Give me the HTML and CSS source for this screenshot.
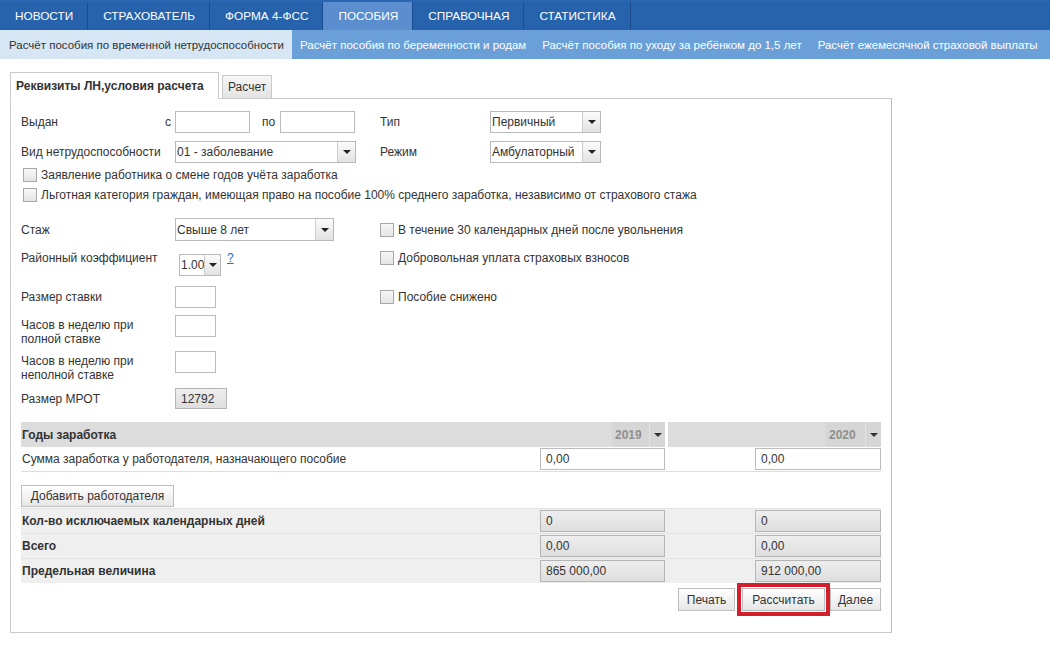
FILE: index.html
```html
<!DOCTYPE html>
<html lang="ru">
<head>
<meta charset="utf-8">
<title>Расчёт пособия</title>
<link rel="stylesheet" href="styles.css">
</head>
<body>
<div class="topnav">
  <div class="nav-item">НОВОСТИ</div>
  <div class="nav-item">СТРАХОВАТЕЛЬ</div>
  <div class="nav-item">ФОРМА 4-ФСС</div>
  <div class="nav-item active">ПОСОБИЯ</div>
  <div class="nav-item">СПРАВОЧНАЯ</div>
  <div class="nav-item">СТАТИСТИКА</div>
</div>
<div class="subnav">
  <div class="sub-item active">Расчёт пособия по временной нетрудоспособности</div>
  <div class="sub-item">Расчёт пособия по беременности и родам</div>
  <div class="sub-item">Расчёт пособия по уходу за ребёнком до 1,5 лет</div>
  <div class="sub-item">Расчёт ежемесячной страховой выплаты</div>
</div>

<div class="content">
  <div class="tabs">
    <div class="tab active">Реквизиты ЛН,условия расчета</div>
    <div class="tab">Расчет</div>
  </div>
  <div class="panel">
    <div class="grid row-1">
      <div class="lbl split"><span>Выдан</span><span>с</span></div>
      <div class="ctl"><span class="input w75"></span><span class="mid">по</span><span class="input w75"></span></div>
      <div class="lbl">Тип</div>
      <div class="ctl"><div class="select w111"><span class="val">Первичный</span><span class="arrow"></span></div></div>
    </div>
    <div class="grid row-2">
      <div class="lbl">Вид нетрудоспособности</div>
      <div class="ctl"><div class="select w181"><span class="val">01 - заболевание</span><span class="arrow"></span></div></div>
      <div class="lbl">Режим</div>
      <div class="ctl"><div class="select w111"><span class="val">Амбулаторный</span><span class="arrow"></span></div></div>
    </div>
    <div class="cb-row first"><span class="cb"></span><span>Заявление работника о смене годов учёта заработка</span></div>
    <div class="cb-row"><span class="cb"></span><span>Льготная категория граждан, имеющая право на пособие 100% среднего заработка, независимо от страхового стажа</span></div>

    <div class="grid row-stazh">
      <div class="lbl">Стаж</div>
      <div class="ctl"><div class="select w159 h23"><span class="val">Свыше 8 лет</span><span class="arrow"></span></div></div>
      <div class="right cb-inline"><span class="cb"></span><span>В течение 30 календарных дней после увольнения</span></div>
    </div>
    <div class="grid row-rk">
      <div class="lbl top">Районный коэффициент</div>
      <div class="ctl start"><div class="select rk"><span class="val">1.00</span><span class="arrow narrow"></span></div><a class="help">?</a></div>
      <div class="right cb-inline top-cb"><span class="cb"></span><span>Добровольная уплата страховых взносов</span></div>
    </div>
    <div class="grid row-stavka">
      <div class="lbl">Размер ставки</div>
      <div class="ctl"><span class="input w41"></span></div>
      <div class="right cb-inline"><span class="cb"></span><span>Пособие снижено</span></div>
    </div>
    <div class="grid row-hours">
      <div class="lbl two">Часов в неделю при<br>полной ставке</div>
      <div class="ctl start"><span class="input w41"></span></div>
    </div>
    <div class="grid row-hours2">
      <div class="lbl two">Часов в неделю при<br>неполной ставке</div>
      <div class="ctl start"><span class="input w41"></span></div>
    </div>
    <div class="grid row-mrot">
      <div class="lbl">Размер МРОТ</div>
      <div class="ctl"><span class="ro mrot">12792</span></div>
    </div>

    <div class="tbl">
      <div class="trow head">
        <div class="hcell first"><span class="b">Годы заработка</span><div class="ysel"><span class="yv">2019</span><span class="ya"></span></div></div>
        <div class="hcell second"><div class="ysel"><span class="yv">2020</span><span class="ya"></span></div></div>
      </div>
      <div class="trow sum">
        <div class="tl">Сумма заработка у работодателя, назначающего пособие</div>
        <div class="tc"><span class="input full">0,00</span></div>
        <div></div>
        <div class="tc"><span class="input full">0,00</span></div>
      </div>
      <div class="add-row"><span class="btn add">Добавить работодателя</span></div>
      <div class="trow gray">
        <div class="tl b">Кол-во исключаемых календарных дней</div>
        <div class="tc"><span class="ro full">0</span></div>
        <div></div>
        <div class="tc"><span class="ro full">0</span></div>
      </div>
      <div class="trow gray">
        <div class="tl b">Всего</div>
        <div class="tc"><span class="ro full">0,00</span></div>
        <div></div>
        <div class="tc"><span class="ro full">0,00</span></div>
      </div>
      <div class="trow gray">
        <div class="tl b">Предельная величина</div>
        <div class="tc"><span class="ro full">865 000,00</span></div>
        <div></div>
        <div class="tc"><span class="ro full">912 000,00</span></div>
      </div>
    </div>
    <div class="actions">
      <span class="btn print">Печать</span>
      <span class="btn calc">Рассчитать</span>
      <span class="btn next">Далее</span>
    </div>
  </div>
</div>
</body>
</html>
```

FILE: styles.css
```css
* { box-sizing: border-box; }
body {
  margin: 0;
  font-family: "Liberation Sans", Arial, sans-serif;
  font-size: 12px;
  color: #333;
  background: #fff;
}

/* top navigation */
.topnav {
  display: flex;
  height: 30px;
  background: #2763ad;
  border-top: 2px solid #2a66b1;
}
.nav-item {
  display: flex;
  align-items: center;
  flex: none;
  white-space: nowrap;
  padding: 0 14px 0 15px;
  color: #fff;
  font-size: 11.8px;
  border-right: 1px solid #1c4d90;
}
.nav-item.active { background: #5b8ecf; }

.subnav {
  display: flex;
  height: 29px;
  background: #6a9fd8;
  overflow: hidden;
}
.sub-item {
  display: flex;
  align-items: center;
  flex: none;
  white-space: nowrap;
  padding: 0 8px;
  color: #fff;
  font-size: 11.5px;
}
.sub-item.active { background: #d6e6f5; color: #333; padding-left: 9px; }

/* content & tabs */
.content {
  margin: 13px 0 0 10px;
  width: 882px;
}
.tabs {
  display: flex;
  align-items: flex-end;
  margin-bottom: -1px;
  position: relative;
  z-index: 1;
}
.tab {
  height: 24px;
  display: flex;
  align-items: center;
  padding: 0 5px;
  border: 1px solid #c9c9c9;
  background: linear-gradient(#f6f6f6, #e3e3e3);
  margin-left: 3px;
}
.tab.active {
  height: 27px;
  width: 209px;
  margin-left: 0;
  font-weight: bold;
  background: #fff;
  border-bottom-color: #fff;
}
.panel {
  border: 1px solid #c9c9c9;
  border-right-color: #bdbdbd;
  padding: 13px 10px 21px 10px;
}

/* form rows */
.grid {
  display: grid;
  grid-template-columns: 154px 205px 110px 1fr;
  align-items: center;
}
.row-1 { height: 22px; margin-top: -1px; }
.row-2 { height: 22px; margin-top: 8px; }
.row-stazh { height: 23px; margin-top: 13px; }
.row-rk { height: 28px; margin-top: 7px; align-items: start; }
.row-stavka { height: 22px; margin-top: 10px; }
.row-hours { height: 31px; margin-top: 7px; align-items: start; }
.row-hours2 { height: 31px; margin-top: 5px; align-items: start; }
.row-mrot { height: 21px; margin-top: 6px; }

.lbl { white-space: nowrap; }
.lbl.split { display: flex; justify-content: space-between; padding-right: 4px; }
.lbl.top { padding-top: 3px; }
.lbl.two { padding-top: 3px; line-height: 14px; }
.ctl { display: flex; align-items: center; }
.ctl.start { align-items: flex-start; }
.right { grid-column: 3 / 5; }

.input {
  display: flex;
  align-items: center;
  height: 22px;
  border: 1px solid #bcbcbc;
  background: #fff;
  padding-left: 5px;
}
.w75 { width: 75px; }
.w41 { width: 41px; }
.mid { margin: 0 5px 0 12px; }

.select {
  display: flex;
  height: 22px;
  border: 1px solid #b9b9b9;
  background: #fff;
}
.select.h23 { height: 23px; }
.w111 { width: 111px; }
.w181 { width: 181px; }
.w159 { width: 159px; }
.select.rk { margin: 6px 0 0 4px; width: 42px; }
.select .val {
  flex: 1;
  display: flex;
  align-items: center;
  padding-left: 1px;
  white-space: nowrap;
  overflow: hidden;
}
.select.rk .val { overflow: visible; }
.arrow {
  width: 18px;
  flex: none;
  border-left: 1px solid #cdcdcd;
  background: linear-gradient(#fbfbfb, #e2e2e2);
  display: flex;
  align-items: center;
  justify-content: center;
}
.arrow.narrow { width: 16px; }
.arrow::after {
  content: "";
  border-left: 4px solid transparent;
  border-right: 4px solid transparent;
  border-top: 4px solid #222;
}
.help {
  margin: 3px 0 0 6px;
  color: #2a6fb8;
  text-decoration: underline;
}

/* checkboxes */
.cb {
  display: inline-block;
  width: 14px;
  height: 14px;
  border: 1px solid #a8a8a8;
  background: linear-gradient(#f7f7f7, #e4e4e4);
  margin-right: 4px;
  flex: none;
}
.cb-row {
  display: flex;
  align-items: center;
  height: 20px;
  padding-left: 2px;
}
.cb-row.first { margin-top: 2px; }
.cb-inline { display: flex; align-items: center; height: 22px; }
.cb-inline.top-cb { height: 20px; }

.ro {
  display: flex;
  align-items: center;
  height: 21px;
  border: 1px solid #b5b5b5;
  background: linear-gradient(#eeeeee, #dedede);
  padding-left: 5px;
}
.mrot { width: 52px; }

/* table */
.tbl { margin-top: 13px; }
.trow {
  display: grid;
  grid-template-columns: 519px 125px 90px 126px;
  align-items: center;
  height: 25px;
}
.trow.head {
  grid-template-columns: 644px 216px;
}
.hcell {
  height: 25px;
  background: #dcdcdc;
  display: flex;
  align-items: center;
  justify-content: space-between;
}
.hcell.first { padding-left: 1px; }
.hcell.second { margin-left: 3px; justify-content: flex-end; }
.b { font-weight: bold; }
.ysel {
  display: flex;
  height: 25px;
  width: 53px;
  background: #d6d6d6;
}
.hcell.second .ysel { width: 55px; }
.yv {
  flex: 1;
  display: flex;
  align-items: center;
  padding-left: 3px;
  font-weight: bold;
  color: #8f8f8f;
}
.ya {
  width: 16px;
  border-left: 1px solid #e4e4e4;
  display: flex;
  align-items: center;
  justify-content: center;
}
.ya::after {
  content: "";
  border-left: 4px solid transparent;
  border-right: 4px solid transparent;
  border-top: 4px solid #333;
}
.trow.sum { border-bottom: 1px solid #dedede; }
.input.full, .ro.full { width: 100%; }
.ro.full { height: 22px; }
.tl { padding-left: 1px; white-space: nowrap; }

.add-row { height: 36px; padding-top: 13px; }
.btn {
  display: inline-flex;
  align-items: center;
  justify-content: center;
  height: 22px;
  border: 1px solid #bdbdbd;
  background: linear-gradient(#ffffff, #e6e6e6);
  color: #333;
}
.btn.add { width: 153px; }

.trow.gray {
  background: #efefef;
  border-top: 1px solid #e2e2e2;
}

.actions {
  display: flex;
  justify-content: flex-end;
  margin-top: 5px;
  height: 23px;
}
.actions .btn { height: 23px; }
.btn.print { width: 57px; }
.btn.calc {
  width: 83px;
  margin-left: 7px;
  outline: 4px solid #d21f2b;
  outline-offset: 1px;
}
.btn.next { width: 51px; margin-left: 5px; }
```
